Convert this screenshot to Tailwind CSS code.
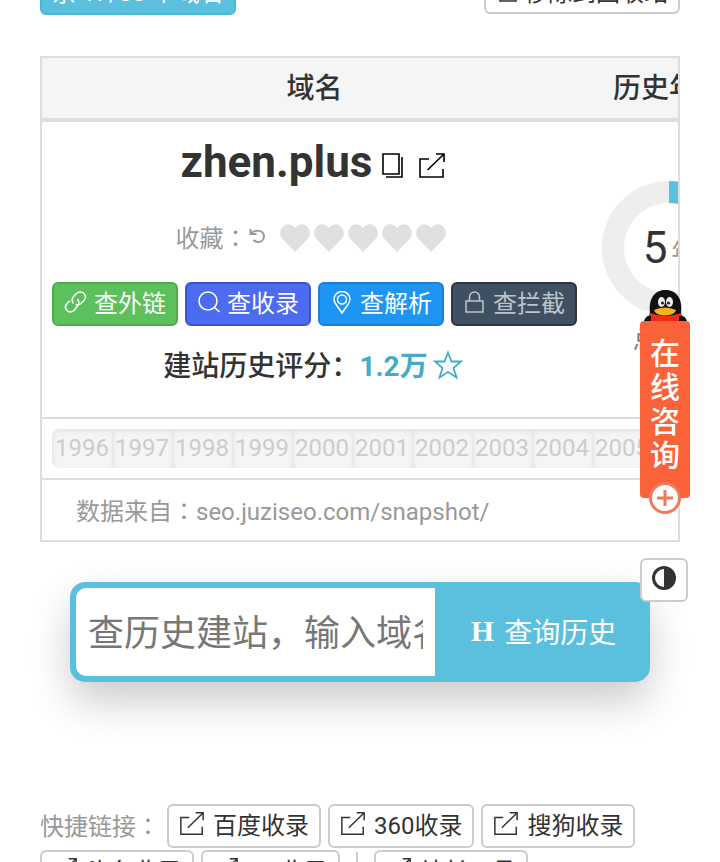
<!DOCTYPE html>
<html lang="zh-CN">
<head>
    <meta charset="UTF-8">
    <meta name="viewport" content="width=device-width, initial-scale=1.0">
    <title>zhen.plus | 查历史建站</title>
    <script src="https://cdn.jsdelivr.net/npm/@tailwindcss/browser@4"></script>
</head>
<body class="bg-white text-[#333] text-2xl font-[Roboto,'Noto_Sans_CJK_SC',sans-serif] h-screen overflow-hidden">

<!-- Shared icons -->
<svg class="hidden">
    <symbol id="icon-share" viewBox="0 0 28 28">
        <path d="M11 7H2v18h23v-8M9.500 18 25 3M18 2h8v8" fill="none" stroke="currentColor" stroke-width="1.600"/>
    </symbol>
    <symbol id="icon-heart" viewBox="0 0 30 28">
        <path d="M15 28 2 14.500C-1 11 0 5 3 2.500 6-.5 10-.5 13 2l2 2 2-2c3-2.500 7-2.500 10 .5 3 2.500 4 8.500 1 12z" fill="currentColor"/>
    </symbol>
</svg>

<main class="px-10">
    <!-- Toolbar -->
    <div class="-mt-[29px] flex justify-between">
        <button class="h-11 px-[10px] rounded-md border-2 border-[#46b8da] bg-[#5bc0de] text-white whitespace-nowrap leading-none">余 17/88 个域名</button>
        <button class="h-[43px] px-[10px] flex items-center gap-1 rounded-md border-2 border-[#ccc] bg-white whitespace-nowrap leading-none">
            <svg class="w-6 h-6" viewBox="0 0 24 24" fill="none" stroke="currentColor" stroke-width="1.500"><path d="M2 4h20M8 4V1h8v3M4 4v16h16V4M9 8v8M15 8v8"/></svg>
            移除到回收站
        </button>
    </div>

    <!-- Domain table -->
    <div class="mt-[41px] border-2 border-[#ddd] overflow-hidden">
        <table class="table-fixed w-[709px] border-collapse">
            <colgroup>
                <col class="w-[545px]">
                <col class="w-[164px]">
            </colgroup>
            <thead>
                <tr class="h-[62px] bg-[#f5f5f5] text-[28px] leading-none">
                    <th class="p-0 pt-[2px] font-medium border-b-4 border-[#ddd]">域名</th>
                    <th class="p-0 pt-[2px] font-medium border-b-4 border-[#ddd] whitespace-nowrap">历史年龄</th>
                </tr>
            </thead>
            <tbody>
                <tr>
                    <td class="p-0 pt-[14px] pb-[30px]">
                        <div class="mr-[2px] h-[52px] flex items-center justify-center">
                            <a href="#" class="text-[44px] leading-none font-bold">zhen.plus</a>
                            <button class="ml-[6px] mt-2 text-black" aria-label="复制">
                                <svg class="w-7 h-7" viewBox="0 0 28 28" fill="none" stroke="currentColor" stroke-width="1.600"><path d="M5 2h16v20H5zM8 25h16V5"/></svg>
                            </button>
                            <a href="#" class="ml-3 mt-2 text-black" aria-label="打开"><svg class="w-7 h-7"><use href="#icon-share"/></svg></a>
                        </div>
                        <div class="mt-8 mr-2 h-9 flex items-center justify-center text-[#999]">
                            <span>收藏<span class="font-['Noto_Sans_CJK_TC']" lang="zh-TW">：</span></span>
                            <button class="mr-3 mb-1" aria-label="重置">
                                <svg class="w-5 h-5" viewBox="0 0 20 20" fill="none" stroke="currentColor" stroke-width="2"><path d="M2.500 3v5h6M3 7.500C7 3 16 4 16 10.500c0 3.500-3 5.500-6 5.500-2 0-3.500-1-4.500-2"/></svg>
                            </button>
                            <div class="flex gap-1 text-[#e0e0e0]">
                                <svg class="w-[30px] h-7"><use href="#icon-heart"/></svg>
                                <svg class="w-[30px] h-7"><use href="#icon-heart"/></svg>
                                <svg class="w-[30px] h-7"><use href="#icon-heart"/></svg>
                                <svg class="w-[30px] h-7"><use href="#icon-heart"/></svg>
                                <svg class="w-[30px] h-7"><use href="#icon-heart"/></svg>
                            </div>
                        </div>
                        <div class="mt-[26px] flex justify-center gap-[7px] leading-none whitespace-nowrap">
                            <a href="#" class="h-11 px-[10px] flex items-center gap-1 rounded-md border-2 border-[#4cae4c] bg-[#5cc05c] text-white">
                                <svg class="w-[26px] h-[26px]" viewBox="0 0 26 26" fill="none" stroke="currentColor" stroke-width="1.500" stroke-linecap="round"><path d="M9 12c-1.500-3-1-5 1-7l2-2c2.500-2.500 6-2.500 8-.5s2 5-.5 7.500l-2 2c-1.500 1.500-3 2-5 1.500M14 8.500c1.500 3 1 5-1 7l-2.500 3.500c-2.500 2.500-5.500 2.500-7.500.5s-2-5 .5-7.500l2-2"/></svg>
                                查外链
                            </a>
                            <a href="#" class="h-11 px-[10px] flex items-center gap-1 rounded-md border-2 border-[#3c55cf] bg-[#4c6bf0] text-white">
                                <svg class="w-[26px] h-[26px]" viewBox="0 0 26 26" fill="none" stroke="currentColor" stroke-width="1.500"><circle cx="11" cy="10" r="9"/><path d="M17.500 16.500 22.500 21"/></svg>
                                查收录
                            </a>
                            <a href="#" class="h-11 px-[10px] flex items-center gap-1 rounded-md border-2 border-[#1a7fd6] bg-[#1e95f3] text-white">
                                <svg class="w-[26px] h-[26px]" viewBox="0 0 26 26" fill="none" stroke="currentColor" stroke-width="1.500"><path d="M12 22C8 16 4 12 4 8.500a8 8 0 0 1 16 0c0 3.500-4 7.500-8 13.500z"/><circle cx="12" cy="8.500" r="4.500"/></svg>
                                查解析
                            </a>
                            <a href="#" class="h-11 px-[10px] flex items-center gap-1 rounded-md border-2 border-[#2f3640] bg-[#3f5063] text-[#bcc5c8]">
                                <svg class="w-[26px] h-[26px]" viewBox="0 0 26 26" fill="none" stroke="currentColor" stroke-width="1.500"><path d="M3 10h17v11H3zM6.500 10V6a5 5 0 0 1 10 0v4"/></svg>
                                查拦截
                            </a>
                        </div>
                        <div class="mt-[21px] mr-[2px] h-10 flex items-center justify-center text-[28px] leading-none">
                            <span class="font-medium">建站历史评分：</span>
                            <a href="#" class="flex items-center gap-1 font-bold text-[#46aac8]">
                                1.2万
                                <svg class="w-8 h-8 mb-1" viewBox="0 0 32 32" fill="none" stroke="currentColor" stroke-width="1.800"><path d="M16 3.500l3.500 9H29l-7.500 6.500 3 9.500-8.500-5.500-8.500 5.500 3-9.500L3 12.500h9.500z"/></svg>
                            </a>
                        </div>
                    </td>
                    <td class="p-0 align-top">
                        <div class="mt-[59px] relative mx-auto w-[134px]">
                            <svg class="w-[134px] h-[134px]" viewBox="0 0 134 134" fill="none" stroke-width="22">
                                <circle cx="67" cy="67" r="56" stroke="#eee"/>
                                <path d="M67 11A56 56 0 0 1 100 22" stroke="#5bc0de"/>
                            </svg>
                            <div class="absolute inset-0 flex items-center justify-center gap-1 whitespace-nowrap leading-none">
                                <span class="text-[44px]">5</span><span class="text-2xl pt-2 text-[#999]">年</span>
                            </div>
                        </div>
                        <div class="mt-[10px] text-center text-[#777] leading-8">总年龄</div>
                    </td>
                </tr>
                <tr>
                    <td colspan="2" class="h-[61px] p-0 border-t-2 border-[#ddd]">
                        <div class="ml-[10px] flex h-[39px] rounded-lg overflow-hidden bg-[#f5f5f5] text-[#ccc] leading-[39px] text-center *:w-[60px] *:shrink-0 *:shadow-[inset_1px_2px_5px_#e0e0e0]">
                            <span>1996</span>
                            <span>1997</span>
                            <span>1998</span>
                            <span>1999</span>
                            <span>2000</span>
                            <span>2001</span>
                            <span>2002</span>
                            <span>2003</span>
                            <span>2004</span>
                            <span>2005</span>
                            <span>2006</span>
                        </div>
                    </td>
                </tr>
                <tr>
                    <td colspan="2" class="h-[61px] p-0 pt-[2px] pl-[34px] border-t-2 border-[#ddd] text-[#999] leading-none">数据来自<span class="font-['Noto_Sans_CJK_TC']" lang="zh-TW">：</span>seo.juziseo.com/snapshot/</td>
                </tr>
            </tbody>
        </table>
    </div>

    <!-- History search -->
    <form class="mt-10 mx-[30px] flex h-[100px] rounded-[15px] border-6 border-[#5bc0de] bg-[#5bc0de] shadow-[0_20px_40px_rgba(0,0,0,0.2)]">
        <input type="text" aria-label="查历史建站" placeholder="查历史建站，输入域名" class="min-w-0 flex-1 px-3 pt-1 rounded-l-[10px] bg-white text-4xl placeholder:text-[#777] outline-none">
        <button type="button" class="w-[209px] pl-2 pt-1 flex items-center justify-center gap-[10px] text-[28px] leading-none text-white whitespace-nowrap">
            <b class="pb-[6px] font-['Liberation_Serif'] text-[30px] leading-8">H</b>查询历史
        </button>
    </form>

    <!-- Quick links -->
    <div class="mt-[122px] flex flex-wrap items-center gap-x-[7px] gap-y-[2px] leading-none whitespace-nowrap">
        <span class="text-[#999]">快捷链接<span class="font-['Noto_Sans_CJK_TC']" lang="zh-TW">：</span></span>
        <a href="#" class="h-11 px-[10px] flex items-center gap-2 rounded-md border-2 border-[#ccc]"><svg class="w-[26px] h-[26px] mb-1"><use href="#icon-share"/></svg>百度收录</a>
        <a href="#" class="h-11 px-[10px] flex items-center gap-2 rounded-md border-2 border-[#ccc]"><svg class="w-[26px] h-[26px] mb-1"><use href="#icon-share"/></svg>360收录</a>
        <a href="#" class="h-11 px-[10px] flex items-center gap-2 rounded-md border-2 border-[#ccc]"><svg class="w-[26px] h-[26px] mb-1"><use href="#icon-share"/></svg>搜狗收录</a>
        <a href="#" class="h-11 px-[10px] flex items-center gap-2 rounded-md border-2 border-[#ccc]"><svg class="w-[26px] h-[26px] mb-1"><use href="#icon-share"/></svg>头条收录</a>
        <a href="#" class="h-11 px-[10px] flex items-center gap-2 rounded-md border-2 border-[#ccc]"><svg class="w-[26px] h-[26px] mb-1"><use href="#icon-share"/></svg>QQ收录</a>
        <span class="mx-[9px] w-0.5 h-10 bg-[#ccc]"></span>
        <a href="#" class="h-11 px-[10px] flex items-center gap-2 rounded-md border-2 border-[#ccc]"><svg class="w-[26px] h-[26px] mb-1"><use href="#icon-share"/></svg>站长工具</a>
    </div>
</main>

<!-- Floating service tab -->
<a href="#" class="fixed right-[30px] top-[289px] w-[50px] flex flex-col items-center text-white">
    <svg class="w-[50px] h-8" viewBox="0 0 50 32">
        <path d="M10 23q15-5 31 0l3 9H7z" fill="#f12b16"/>
        <path d="M4 32q2-6 7-5v5zM47 32q-2-6-8-5v5z" fill="#111"/>
        <path d="M10 24C8 8 16 1 25.500 1S43 8 41 24q-15 6-31 0z" fill="#111"/>
        <ellipse cx="21.500" cy="13" rx="3.500" ry="5" fill="#eee"/>
        <ellipse cx="29.500" cy="13" rx="3.500" ry="5" fill="#eee"/>
        <circle cx="22.500" cy="14" r="1.600" fill="#222"/>
        <circle cx="28.500" cy="14" r="1.600" fill="#222"/>
        <path d="M14 21q11-5 22 0-1 5-11 5.500-10-.5-11-5.500z" fill="#fbb11c"/>
    </svg>
    <span class="w-full h-[177px] pt-4 px-[10px] rounded-sm bg-[#fa633a] text-[30px] leading-[34px] font-medium break-all">在线咨询</span>
    <svg class="-mt-4 w-8 h-8" viewBox="0 0 32 32"><circle cx="16" cy="16" r="14.500" fill="#fff" stroke="#f0795a" stroke-width="3"/><path d="M16 8v16M8 16h16" stroke="#f0795a" stroke-width="3"/></svg>
</a>

<!-- Theme toggle -->
<button class="fixed right-8 top-[558px] w-12 h-11 flex items-center justify-center rounded-md border-2 border-[#ccc] bg-white" aria-label="切换主题">
    <svg class="w-6 h-6 -mt-1" viewBox="0 0 24 24"><circle cx="12" cy="12" r="10.500" fill="none" stroke="currentColor" stroke-width="3"/><path d="M12 1a11 11 0 0 1 0 22z" fill="currentColor"/></svg>
</button>

</body>
</html>
